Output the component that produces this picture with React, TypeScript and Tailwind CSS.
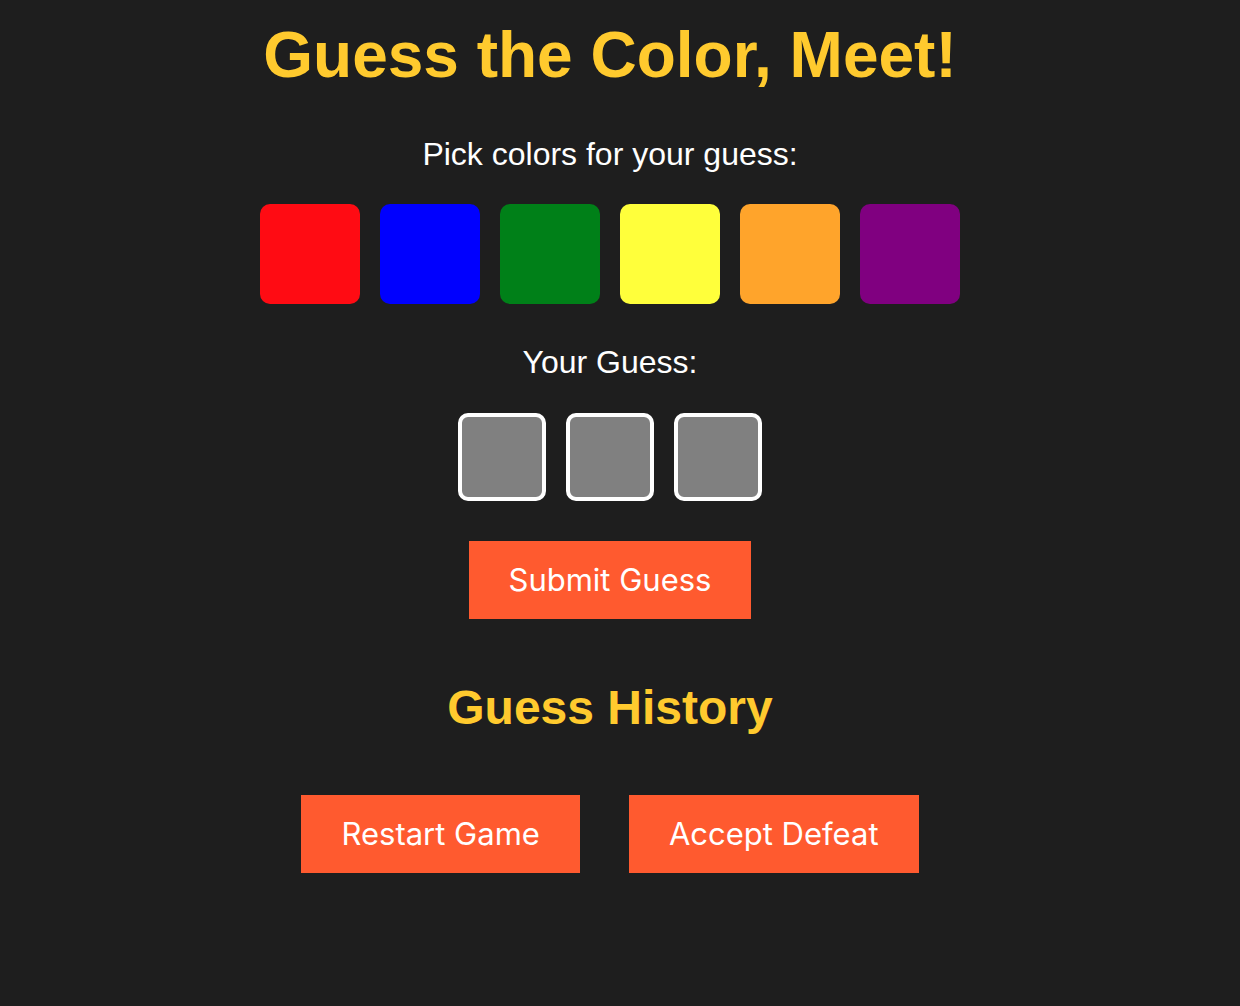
import { useState } from "react";

const COLORS = [
    { name: "red", hex: "#ff0b13" },
    { name: "blue", hex: "#0000ff" },
    { name: "green", hex: "#008018" },
    { name: "yellow", hex: "#ffff3b" },
    { name: "orange", hex: "#ffa42b" },
    { name: "purple", hex: "#800080" },
];

export default function App() {
    const [guess, setGuess] = useState<(string | null)[]>([null, null, null]);

    const pickColor = (hex: string) => {
        const idx = guess.indexOf(null);
        if (idx === -1) return;
        const next = [...guess];
        next[idx] = hex;
        setGuess(next);
    };

    const btn =
        "bg-[#ff5a2f] text-white text-[31px] leading-[38px] px-10 py-5 font-['Inter',sans-serif]";

    return (
        <div className="min-h-screen w-full bg-[#1e1e1e] font-['Liberation_Sans',Arial,sans-serif]">
            <div className="w-[1220px] flex flex-col items-center">
                <h1 className="mt-[19px] text-[64px] leading-[1.15] font-bold text-[#ffca2e]">
                    Guess the Color, Meet!
                </h1>

                <p className="mt-[43px] text-[32px] leading-[1.15] text-white">Pick colors for your guess:</p>
                <div className="mt-[32px] flex gap-5">
                    {COLORS.map((c) => (
                        <button
                            key={c.name}
                            onClick={() => pickColor(c.hex)}
                            className="size-[100px] rounded-[10px]"
                            style={{ backgroundColor: c.hex }}
                        />
                    ))}
                </div>

                <p className="mt-[40px] text-[32px] leading-[1.15] text-white">Your Guess:</p>
                <div className="mt-[32px] flex gap-5">
                    {guess.map((g, i) => (
                        <div
                            key={i}
                            className="size-[88px] rounded-[10px] border-4 border-white bg-[#808080]"
                            style={g ? { backgroundColor: g } : undefined}
                        />
                    ))}
                </div>

                <button className={`mt-[40px] ${btn}`}>Submit Guess</button>

                <h2 className="mt-[61px] text-[48px] leading-[1.15] font-bold text-[#ffca2e]">Guess History</h2>

                <div className="mt-[60px] flex gap-[49px]">
                    <button className={btn} onClick={() => setGuess([null, null, null])}>
                        Restart Game
                    </button>
                    <button className={btn}>Accept Defeat</button>
                </div>
            </div>
        </div>
    );
}
